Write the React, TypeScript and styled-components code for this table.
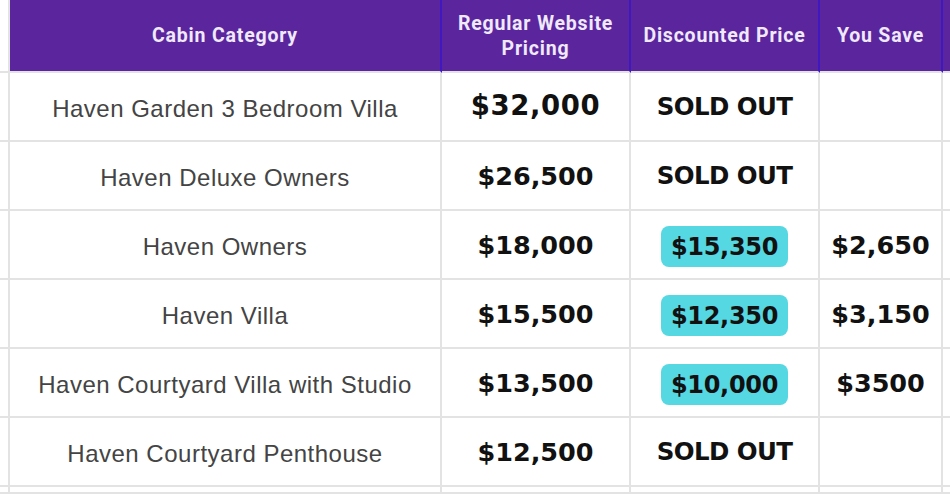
import styled, { createGlobalStyle } from "styled-components";

//style

const GlobalStyle = createGlobalStyle`
  html, body {
    margin: 0;
    padding: 0;
    background: #ffffff;
  }
  body {
    width: 950px;
    height: 494px;
    overflow: hidden;
  }
`;

const Sheet = styled.div`
  display: grid;
  grid-template-columns: 10px 432px 189px 189px 123px 1fr;
  grid-template-rows: 73px repeat(6, 69px) 1fr;
  width: 950px;
  height: 494px;
  background: #ffffff;
`;

const Gutter = styled.div`
  background: #ffffff;
  border-right: 2px solid #e3e3e3;
  border-bottom: 2px solid #e3e3e3;
  box-sizing: border-box;
`;

const HeadCell = styled.div<{ $last?: boolean }>`
  display: flex;
  align-items: center;
  justify-content: center;
  text-align: center;
  box-sizing: border-box;
  padding: 0 4px;
  background: #5b259d;
  border-right: ${(p) => (p.$last ? "none" : "2px solid #3f19bf")};
  border-bottom: 2px solid #e3e3e3;
  color: #efe9fb;
  font-family: Roboto, "Liberation Sans", sans-serif;
  font-weight: 700;
  font-size: 19.5px;
  letter-spacing: 0.8px;
  line-height: 25px;
  white-space: nowrap;
`;

const NameCell = styled.div`
  display: flex;
  align-items: center;
  justify-content: center;
  box-sizing: border-box;
  border-right: 2px solid #e3e3e3;
  border-bottom: 2px solid #e3e3e3;
  color: #444444;
  font-family: "Liberation Sans", Arial, sans-serif;
  font-size: 24px;
  letter-spacing: 0.5px;
  padding-top: 4px;
`;

const PriceCell = styled.div<{ $big?: boolean }>`
  display: flex;
  align-items: center;
  justify-content: center;
  box-sizing: border-box;
  border-right: 2px solid #e3e3e3;
  border-bottom: 2px solid #e3e3e3;
  color: #111111;
  font-family: "DejaVu Sans", "Noto Sans", sans-serif;
  font-weight: 700;
  font-size: ${(p) => (p.$big ? "27.5px" : "25.5px")};
  letter-spacing: ${(p) => (p.$big ? "0.6px" : "0px")};
  padding-bottom: ${(p) => (p.$big ? "4px" : "0")};
`;

const Filler = styled.div`
  border-bottom: 2px solid #e3e3e3;
  box-sizing: border-box;
`;

const Badge = styled.span`
  display: inline-flex;
  align-items: center;
  justify-content: center;
  width: 127px;
  height: 41px;
  margin-top: 4px;
  border-radius: 8px;
  background: #55d8e2;
  font-size: 24px;
  letter-spacing: -0.3px;
`;

const SoldOut = styled.span`
  font-size: 24.5px;
  letter-spacing: -0.6px;
`;

//

interface Cabin {
  name: string;
  regular: string;
  discounted?: string;
  save?: string;
}

const cabins: Cabin[] = [
  { name: "Haven Garden 3 Bedroom Villa", regular: "$32,000" },
  { name: "Haven Deluxe Owners", regular: "$26,500" },
  { name: "Haven Owners", regular: "$18,000", discounted: "$15,350", save: "$2,650" },
  { name: "Haven Villa", regular: "$15,500", discounted: "$12,350", save: "$3,150" },
  { name: "Haven Courtyard Villa with Studio", regular: "$13,500", discounted: "$10,000", save: "$3500" },
  { name: "Haven Courtyard Penthouse", regular: "$12,500" },
];

function App() {
  return (
    <>
      <GlobalStyle />
      <Sheet>
        <Gutter />
        <HeadCell>Cabin Category</HeadCell>
        <HeadCell>
          Regular Website
          <br />
          Pricing
        </HeadCell>
        <HeadCell>Discounted Price</HeadCell>
        <HeadCell>You Save</HeadCell>
        <HeadCell $last />

        {cabins.map((c, i) => (
          <>
            <Gutter key={c.name + "-g"} />
            <NameCell key={c.name}>{c.name}</NameCell>
            <PriceCell key={c.name + "-r"} $big={i === 0}>
              {c.regular}
            </PriceCell>
            <PriceCell key={c.name + "-d"}>
              {c.discounted ? <Badge>{c.discounted}</Badge> : <SoldOut>SOLD OUT</SoldOut>}
            </PriceCell>
            <PriceCell key={c.name + "-s"}>{c.save}</PriceCell>
            <Filler key={c.name + "-f"} />
          </>
        ))}

        <Gutter />
        <NameCell />
        <PriceCell />
        <PriceCell />
        <PriceCell />
        <Filler />
      </Sheet>
    </>
  );
}

export default App;
